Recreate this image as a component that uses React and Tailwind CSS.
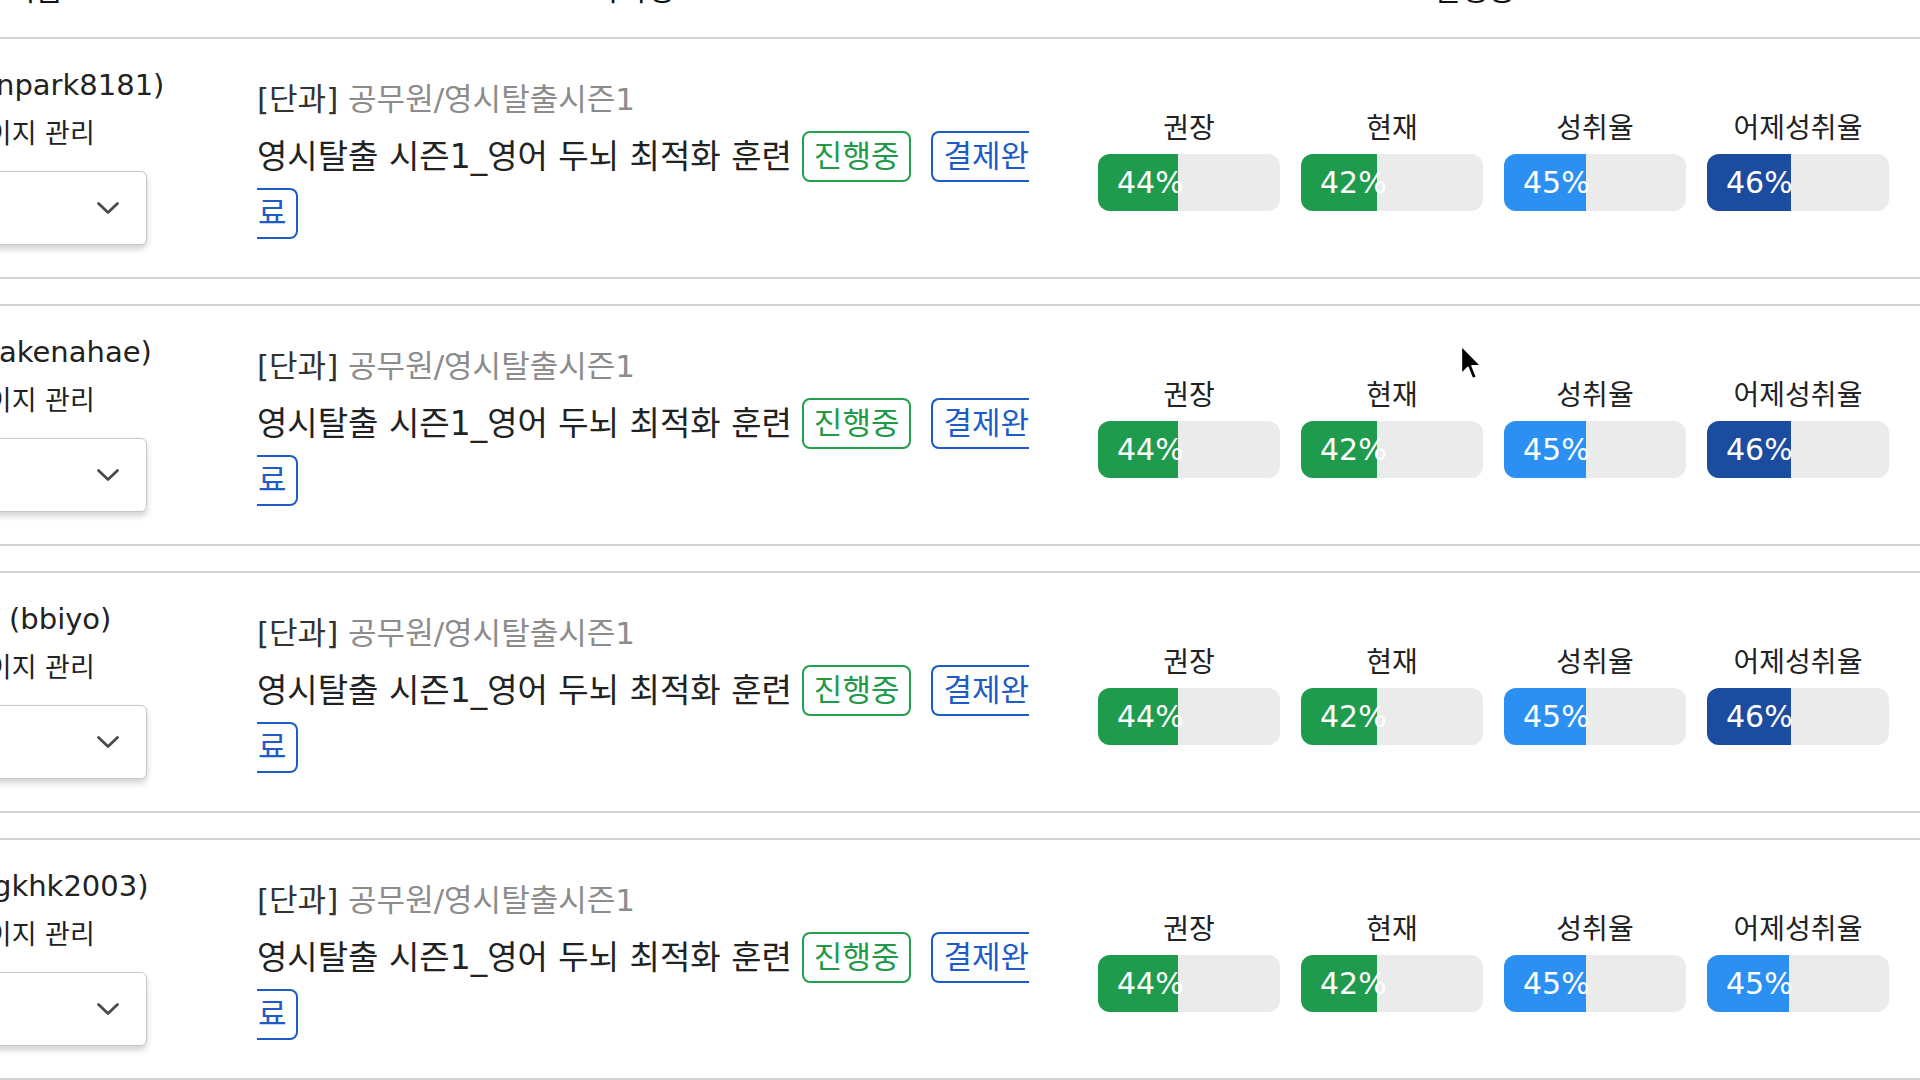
import React from "react";

const GREEN = "bg-[#1f9b4d]";
const BLUE = "bg-[#2b90f2]";
const NAVY = "bg-[#1c4ca0]";

const rows = [
  {
    id: "npark8181)",
    idCls: "-ml-[4px]",
    stats: [
      { label: "권장", value: 44, color: GREEN },
      { label: "현재", value: 42, color: GREEN },
      { label: "성취율", value: 45, color: BLUE },
      { label: "어제성취율", value: 46, color: NAVY },
    ],
  },
  {
    id: "akenahae)",
    idCls: "-ml-[1px]",
    stats: [
      { label: "권장", value: 44, color: GREEN },
      { label: "현재", value: 42, color: GREEN },
      { label: "성취율", value: 45, color: BLUE },
      { label: "어제성취율", value: 46, color: NAVY },
    ],
  },
  {
    id: "(bbiyo)",
    idCls: "ml-[9px]",
    stats: [
      { label: "권장", value: 44, color: GREEN },
      { label: "현재", value: 42, color: GREEN },
      { label: "성취율", value: 45, color: BLUE },
      { label: "어제성취율", value: 46, color: NAVY },
    ],
  },
  {
    id: "gkhk2003)",
    idCls: "-ml-[7px]",
    stats: [
      { label: "권장", value: 44, color: GREEN },
      { label: "현재", value: 42, color: GREEN },
      { label: "성취율", value: 45, color: BLUE },
      { label: "어제성취율", value: 45, color: BLUE },
    ],
  },
];

function Chevron() {
  return (
    <svg width="24" height="14" viewBox="0 0 24 14" fill="none">
      <polyline
        points="2.5,2.5 12,11.5 21.5,2.5"
        stroke="#4a4a4a"
        strokeWidth="2.8"
        strokeLinecap="round"
        strokeLinejoin="round"
      />
    </svg>
  );
}

function Stat({ label, value, color }) {
  return (
    <div className="w-[182px] flex flex-col items-center">
      <div className="text-[28px] leading-[34px] text-[#222] whitespace-nowrap">{label}</div>
      <div className="mt-[8px] w-full h-[57px] rounded-[12px] bg-[#ebebeb] flex">
        <div
          className={`${color} h-full rounded-l-[12px] flex items-center pl-[19px] overflow-visible`}
          style={{ width: `${value}%` }}
        >
          <span className="text-[30px] leading-none text-white whitespace-nowrap">{value}%</span>
        </div>
      </div>
    </div>
  );
}

function Row({ row }) {
  return (
    <div className="h-[242px] mb-[25px] border-y-2 border-[#d2d2d2] flex">
      {/* left column */}
      <div className="w-[257px] shrink-0 overflow-hidden pt-[26px]">
        <div className={`${row.idCls} text-[29px] leading-[40px] text-[#222] whitespace-nowrap`}>{row.id}</div>
        <div className="-ml-[38px] mt-[9px] text-[27px] leading-[40px] text-[#222] whitespace-nowrap">페이지 관리</div>
        <div className="-ml-[60px] mt-[17px] w-[207px] h-[74px] bg-white border border-[#c8c8c8] rounded-[6px] shadow-[0_4px_6px_rgba(0,0,0,0.18)] flex items-center justify-end pr-[26px]">
          <Chevron />
        </div>
      </div>

      {/* middle column */}
      <div className="w-[773px] shrink-0 overflow-hidden pt-[40px]">
        <div className="text-[31px] leading-[40px] whitespace-nowrap">
          <span className="text-[#333]">[단과]</span>{" "}
          <span className="text-[#8c8c8c]">공무원/영시탈출시즌1</span>
        </div>
        <div className="mt-[9px] h-[57px] flex items-center whitespace-nowrap">
          <span className="text-[33px] leading-[57px] text-[#222]">영시탈출 시즌1_영어 두뇌 최적화 훈련</span>
          <span className="ml-[10px] h-[51px] px-[10px] border-2 border-[#22a04b] rounded-[8px] text-[31px] leading-[47px] text-[#1e9a48]">
            진행중
          </span>
          <span className="ml-[20px] h-[51px] pl-[10px] border-2 border-r-0 border-[#1d5cc8] rounded-l-[8px] text-[31px] leading-[47px] text-[#1d5cc8]">
            결제완
          </span>
        </div>
        <div className="h-[57px] flex items-center">
          <span className="h-[51px] pl-[1px] pr-[9px] border-2 border-l-0 border-[#1d5cc8] rounded-r-[8px] text-[31px] leading-[47px] text-[#1d5cc8]">
            료
          </span>
        </div>
      </div>

      {/* stats */}
      <div className="ml-[68px] pt-[73px] flex gap-[21px]">
        {row.stats.map((s, i) => (
          <Stat key={i} {...s} />
        ))}
      </div>
    </div>
  );
}

export default function App() {
  return (
    <div className="relative w-[1920px] h-[1080px] overflow-hidden bg-white font-['DejaVu_Sans','Noto_Sans_CJK_KR',sans-serif]">
      <div className="h-[37px] flex text-[30px] leading-[28px] text-[#111]">
        <div className="w-[257px] shrink-0 -mt-[24px] pl-[8px]">이름</div>
        <div className="w-[773px] shrink-0 -mt-[24px] pl-[335px]">과목명</div>
        <div className="-mt-[24px] pl-[403px]">진행중</div>
      </div>
      {rows.map((r, i) => (
        <Row key={i} row={r} />
      ))}
      <svg
        className="absolute left-[1460px] top-[344px]"
        width="22"
        height="38"
        viewBox="0 0 12.5 21"
      >
        <path
          d="M0.8 0.8 L0.8 16.6 L4.5 13 L7.1 19.4 L9.4 18.4 L6.8 12.1 L11.8 12.1 Z"
          fill="#000"
          stroke="#fff"
          strokeWidth="0.9"
          strokeLinejoin="round"
        />
      </svg>
    </div>
  );
}
